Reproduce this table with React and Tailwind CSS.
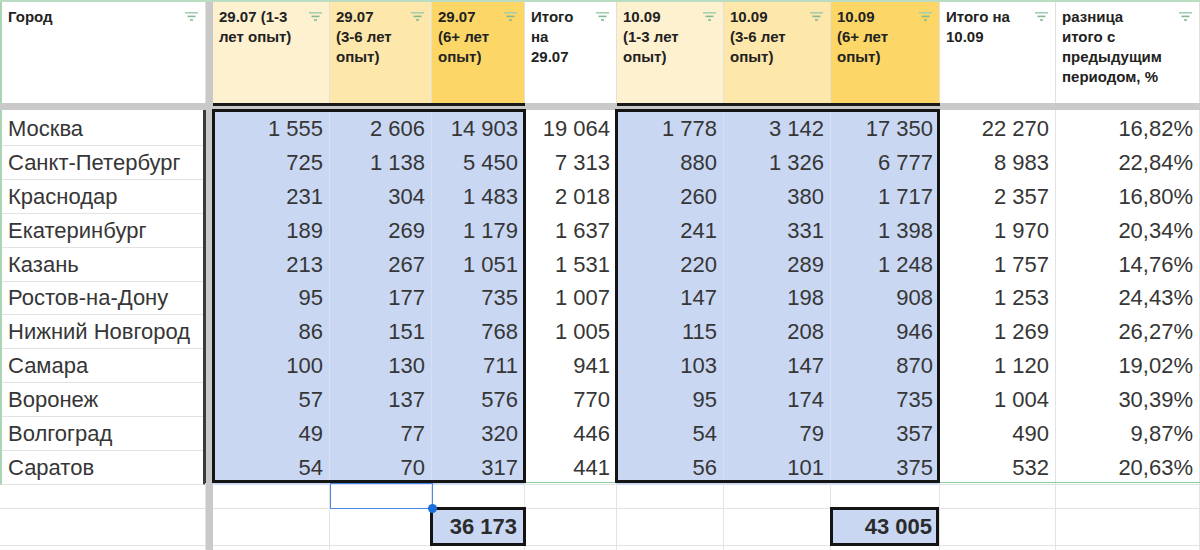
import React from "react";

const GRID =
  "grid grid-cols-[206px_7px_117px_102px_93px_92px_107px_107px_109px_116px_144px]";

const headers = [
  { lines: ["Город"], bg: "bg-white" },
  { lines: ["29.07 (1-3", "лет опыт)"], bg: "bg-[#fef1d0]", dark: true },
  { lines: ["29.07", "(3-6 лет", "опыт)"], bg: "bg-[#fde7aa]", dark: true },
  { lines: ["29.07", "(6+ лет", "опыт)"], bg: "bg-[#fcd767]", dark: true },
  { lines: ["Итого", "на", "29.07"], bg: "bg-white" },
  { lines: ["10.09", "(1-3 лет", "опыт)"], bg: "bg-[#fef1d0]", dark: true },
  { lines: ["10.09", "(3-6 лет", "опыт)"], bg: "bg-[#fde7aa]", dark: true },
  { lines: ["10.09", "(6+ лет", "опыт)"], bg: "bg-[#fcd767]", dark: true },
  { lines: ["Итого на", "10.09"], bg: "bg-white" },
  { lines: ["разница", "итого с", "предыдущим", "периодом, %"], bg: "bg-white" },
];

const rows = [
  ["Москва", "1 555", "2 606", "14 903", "19 064", "1 778", "3 142", "17 350", "22 270", "16,82%"],
  ["Санкт-Петербург", "725", "1 138", "5 450", "7 313", "880", "1 326", "6 777", "8 983", "22,84%"],
  ["Краснодар", "231", "304", "1 483", "2 018", "260", "380", "1 717", "2 357", "16,80%"],
  ["Екатеринбург", "189", "269", "1 179", "1 637", "241", "331", "1 398", "1 970", "20,34%"],
  ["Казань", "213", "267", "1 051", "1 531", "220", "289", "1 248", "1 757", "14,76%"],
  ["Ростов-на-Дону", "95", "177", "735", "1 007", "147", "198", "908", "1 253", "24,43%"],
  ["Нижний Новгород", "86", "151", "768", "1 005", "115", "208", "946", "1 269", "26,27%"],
  ["Самара", "100", "130", "711", "941", "103", "147", "870", "1 120", "19,02%"],
  ["Воронеж", "57", "137", "576", "770", "95", "174", "735", "1 004", "30,39%"],
  ["Волгоград", "49", "77", "320", "446", "54", "79", "357", "490", "9,87%"],
  ["Саратов", "54", "70", "317", "441", "56", "101", "375", "532", "20,63%"],
];

const BLUE = new Set([1, 2, 3, 5, 6, 7]);

function FilterIcon() {
  return (
    <svg width="13" height="9" viewBox="0 0 13 9" className="shrink-0 mt-[5px]">
      <rect x="0" y="0" width="13" height="1.6" fill="#a6cfb0" />
      <rect x="2.5" y="3.6" width="8" height="1.6" fill="#84b994" />
      <rect x="5" y="7.2" width="3" height="1.6" fill="#84b994" />
    </svg>
  );
}

function Freeze() {
  return <div className="bg-[#c9c9c9]" />;
}

export default function App() {
  return (
    <div className="relative w-[1200px] h-[550px] overflow-hidden bg-white font-['Liberation_Sans',Arial,sans-serif] text-[#363636]">
      {/* header */}
      <div className={`${GRID} h-[103px] border-t-2 border-[#b9dcc3]`}>
        {headers.map((h, i) => (
          <React.Fragment key={i}>
            <div
              className={`${h.bg} flex justify-between items-start pl-[6px] pr-[7px] pt-[5px] border-r border-[#e4e0d4] ${
                i === 0 ? "border-l-2 border-l-[#a9d5b5]" : ""
              }`}
            >
              <div className="text-[15px] leading-[20px] font-bold text-[#222]">
                {h.lines.map((l, k) => (
                  <div key={k} className="whitespace-nowrap">
                    {l}
                  </div>
                ))}
              </div>
              <FilterIcon />
            </div>
            {i === 0 && <Freeze />}
          </React.Fragment>
        ))}
      </div>

      {/* frozen row divider */}
      <div className={`${GRID} h-[7px]`}>
        {headers.map((h, i) => (
          <React.Fragment key={i}>
            <div className={h.dark ? "bg-[#c9c9c9] border-t-[3px] border-[#1a1a1a]" : "bg-[#c9c9c9]"} />
            {i === 0 && <Freeze />}
          </React.Fragment>
        ))}
      </div>

      {/* data rows */}
      {rows.map((r, ri) => (
        <div key={ri} className={`${GRID} h-[33.9px]`}>
          {r.map((v, ci) => (
            <React.Fragment key={ci}>
              {ci === 0 ? (
                <div className="flex items-center pt-[2px] pl-[6px] text-[22px] whitespace-nowrap border-b border-[#e3e3e3] border-l-2 border-l-[#a9d5b5] border-r-[3px] border-r-[#3a3a3a]">
                  {v}
                </div>
              ) : (
                <div
                  className={`flex items-center justify-end pt-[2px] pr-[6px] text-[22px] whitespace-nowrap border-b border-r ${
                    BLUE.has(ci)
                      ? "bg-[#c9d7f3] border-[#d6e0f5]"
                      : "bg-white border-[#e3e3e3]"
                  }`}
                >
                  {v}
                </div>
              )}
              {ci === 0 && <Freeze />}
            </React.Fragment>
          ))}
        </div>
      ))}

      {/* empty row 12 */}
      <div className={`${GRID} h-[26px]`}>
        {headers.map((h, i) => (
          <React.Fragment key={i}>
            <div className="border-b border-r border-[#e3e3e3]" />
            {i === 0 && <Freeze />}
          </React.Fragment>
        ))}
      </div>

      {/* totals row */}
      <div className={`${GRID} h-[37px]`}>
        {headers.map((h, i) => (
          <React.Fragment key={i}>
            {i === 3 || i === 7 ? (
              <div className="flex items-center justify-end pr-[7px] text-[22px] font-bold text-[#2b2b2b] bg-[#c9d7f3] border-b border-r border-[#e3e3e3]">
                {i === 3 ? "36 173" : "43 005"}
              </div>
            ) : (
              <div className="border-b border-r border-[#e3e3e3]" />
            )}
            {i === 0 && <Freeze />}
          </React.Fragment>
        ))}
      </div>

      {/* next row */}
      <div className={`${GRID} h-[20px]`}>
        {headers.map((h, i) => (
          <React.Fragment key={i}>
            <div className="border-r border-[#e3e3e3]" />
            {i === 0 && <Freeze />}
          </React.Fragment>
        ))}
      </div>

      {/* filter range bottom (green) */}
      <div className="absolute left-[213px] top-[482px] w-[987px] h-px bg-[#8fcf9f]" />

      {/* selection boxes */}
      <div className="absolute left-[212px] top-[109px] w-[314px] h-[374px] border-[3px] border-[#141414]" />
      <div className="absolute left-[615px] top-[109px] w-[325px] h-[374px] border-[3px] border-[#141414]" />

      {/* totals borders */}
      <div className="absolute left-[430px] top-[507px] w-[96px] h-[39px] border-[3px] border-[#141414]" />
      <div className="absolute left-[830px] top-[507px] w-[109px] h-[39px] border-[3px] border-[#141414]" />

      {/* blue drag outline + handle */}
      <div className="absolute left-[330px] top-[483px] w-[103px] h-[26px] border-[1.5px] border-[#4a86e8]" />
      <div className="absolute left-[428px] top-[504px] w-[9px] h-[9px] rounded-full bg-[#1a6fe0]" />
    </div>
  );
}
